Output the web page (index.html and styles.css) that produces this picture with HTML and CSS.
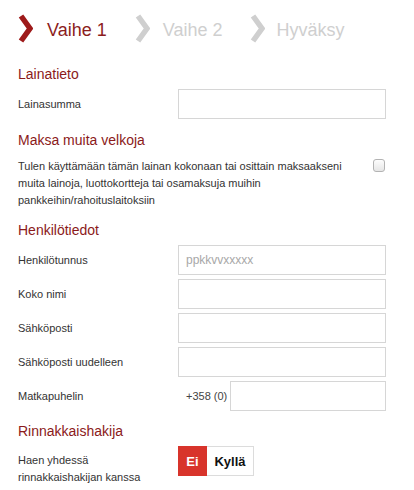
FILE: index.html
```html
<!DOCTYPE html>
<html lang="fi">
<head>
<meta charset="utf-8">
<title>Vaihe 1</title>
<link rel="stylesheet" href="styles.css">
</head>
<body>
<div class="page">
  <nav class="steps">
    <div class="step active">
      <svg class="chev" viewBox="0 0 15 29" width="15" height="29"><polyline points="3,2 12,14.5 3,27" fill="none" stroke="currentColor" stroke-width="5.5" stroke-linejoin="miter"/></svg>
      <span>Vaihe 1</span>
    </div>
    <div class="step">
      <svg class="chev" viewBox="0 0 15 29" width="15" height="29"><polyline points="3,2 12,14.5 3,27" fill="none" stroke="currentColor" stroke-width="5.5" stroke-linejoin="miter"/></svg>
      <span>Vaihe 2</span>
    </div>
    <div class="step">
      <svg class="chev" viewBox="0 0 15 29" width="15" height="29"><polyline points="3,2 12,14.5 3,27" fill="none" stroke="currentColor" stroke-width="5.5" stroke-linejoin="miter"/></svg>
      <span>Hyväksy</span>
    </div>
  </nav>

  <section class="section first">
    <h2 class="heading">Lainatieto</h2>
    <div class="row">
      <label class="label">Lainasumma</label>
      <div class="field"><input class="input" type="text"></div>
    </div>
  </section>

  <section class="section">
    <h2 class="heading">Maksa muita velkoja</h2>
    <div class="check-row">
      <p class="check-text">Tulen käyttämään tämän lainan kokonaan tai osittain maksaakseni muita lainoja, luottokortteja tai osamaksuja muihin pankkeihin/rahoituslaitoksiin</p>
      <span class="checkbox"></span>
    </div>
  </section>

  <section class="section">
    <h2 class="heading">Henkilötiedot</h2>
    <div class="rows">
      <div class="row">
        <label class="label">Henkilötunnus</label>
        <div class="field"><input class="input" type="text" placeholder="ppkkvvxxxxx"></div>
      </div>
      <div class="row">
        <label class="label">Koko nimi</label>
        <div class="field"><input class="input" type="text"></div>
      </div>
      <div class="row">
        <label class="label">Sähköposti</label>
        <div class="field"><input class="input" type="text"></div>
      </div>
      <div class="row">
        <label class="label">Sähköposti uudelleen</label>
        <div class="field"><input class="input" type="text"></div>
      </div>
      <div class="row">
        <label class="label">Matkapuhelin</label>
        <div class="field"><span class="prefix">+358 (0)</span><input class="input" type="text"></div>
      </div>
    </div>
  </section>

  <section class="section last">
    <h2 class="heading">Rinnakkaishakija</h2>
    <div class="row top">
      <label class="label multi">Haen yhdessä rinnakkaishakijan kanssa</label>
      <div class="field">
        <div class="toggle">
          <span class="opt on">Ei</span>
          <span class="opt">Kyllä</span>
        </div>
      </div>
    </div>
  </section>
</div>
</body>
</html>
```

FILE: styles.css
```css
* { box-sizing: border-box; }
html, body { margin: 0; padding: 0; background: #fff; }
body {
  font-family: "Liberation Sans", Arial, sans-serif;
  color: #333;
  width: 414px;
  height: 490px;
  overflow: hidden;
}
.page {
  padding: 14px 28px 0 18px;
}
.steps {
  display: flex;
  align-items: center;
  height: 29px;
}
.step {
  display: flex;
  align-items: center;
  color: #cfcfcf;
  font-size: 18px;
  margin-right: 28px;
}
.step .chev { display: block; margin-right: 13px; }
.step span { line-height: 20px; padding-top: 2px; }
.step.active { color: #8c1d1d; }
.step.active .chev { color: #9e1a1a; margin-right: 14px; }
.step:nth-child(3) .chev { margin-right: 11px; }

.section { margin-top: 13px; }
.section.first { margin-top: 23px; }
.section.last { margin-top: 12px; }
.heading {
  margin: 0 0 7px;
  font-size: 14px;
  line-height: 16px;
  font-weight: normal;
  color: #8b1a1a;
}
.rows { display: flex; flex-direction: column; gap: 4px; }
.row {
  display: flex;
  align-items: center;
}
.row.top { align-items: flex-start; }
.label {
  width: 150px;
  margin-right: 10px;
  font-size: 11px;
  line-height: 16px;
  color: #333;
}
.label.multi { padding-top: 6px; line-height: 17px; }
.field {
  flex: 1;
  display: flex;
  align-items: center;
}
.input {
  flex: 1;
  width: 100%;
  height: 30px;
  border: 1px solid #d6d6d6;
  border-radius: 0;
  padding: 0 7px;
  font-family: "Liberation Sans", Arial, sans-serif;
  font-size: 12px;
  color: #333;
  background: #fff;
  outline: none;
  min-width: 0;
}
.input::placeholder { color: #a8a8a8; }
.prefix {
  font-size: 11px;
  color: #444;
  margin-left: 8px;
  margin-right: 3px;
  white-space: nowrap;
}
.check-row {
  display: flex;
  align-items: flex-start;
  margin-top: 10px;
}
.check-text {
  margin: 0;
  width: 340px;
  font-size: 11px;
  line-height: 17px;
  color: #333;
}
.checkbox {
  display: block;
  width: 12px;
  height: 13px;
  margin-top: 1px;
  margin-left: 15px;
  border: 1px solid #b3b3b3;
  border-radius: 3px;
  background: linear-gradient(#fdfdfd, #e6e6e6);
}
.toggle {
  display: flex;
  height: 30px;
  border: 1px solid #dcdcdc;
  background: #fff;
}
.opt {
  display: flex;
  align-items: center;
  justify-content: center;
  font-size: 13px;
  font-weight: bold;
  color: #111;
  width: 46px;
}
.opt.on {
  width: 29px;
  margin: -1px 0 -1px -1px;
  background: #d8342b;
  color: #fff;
}
```
